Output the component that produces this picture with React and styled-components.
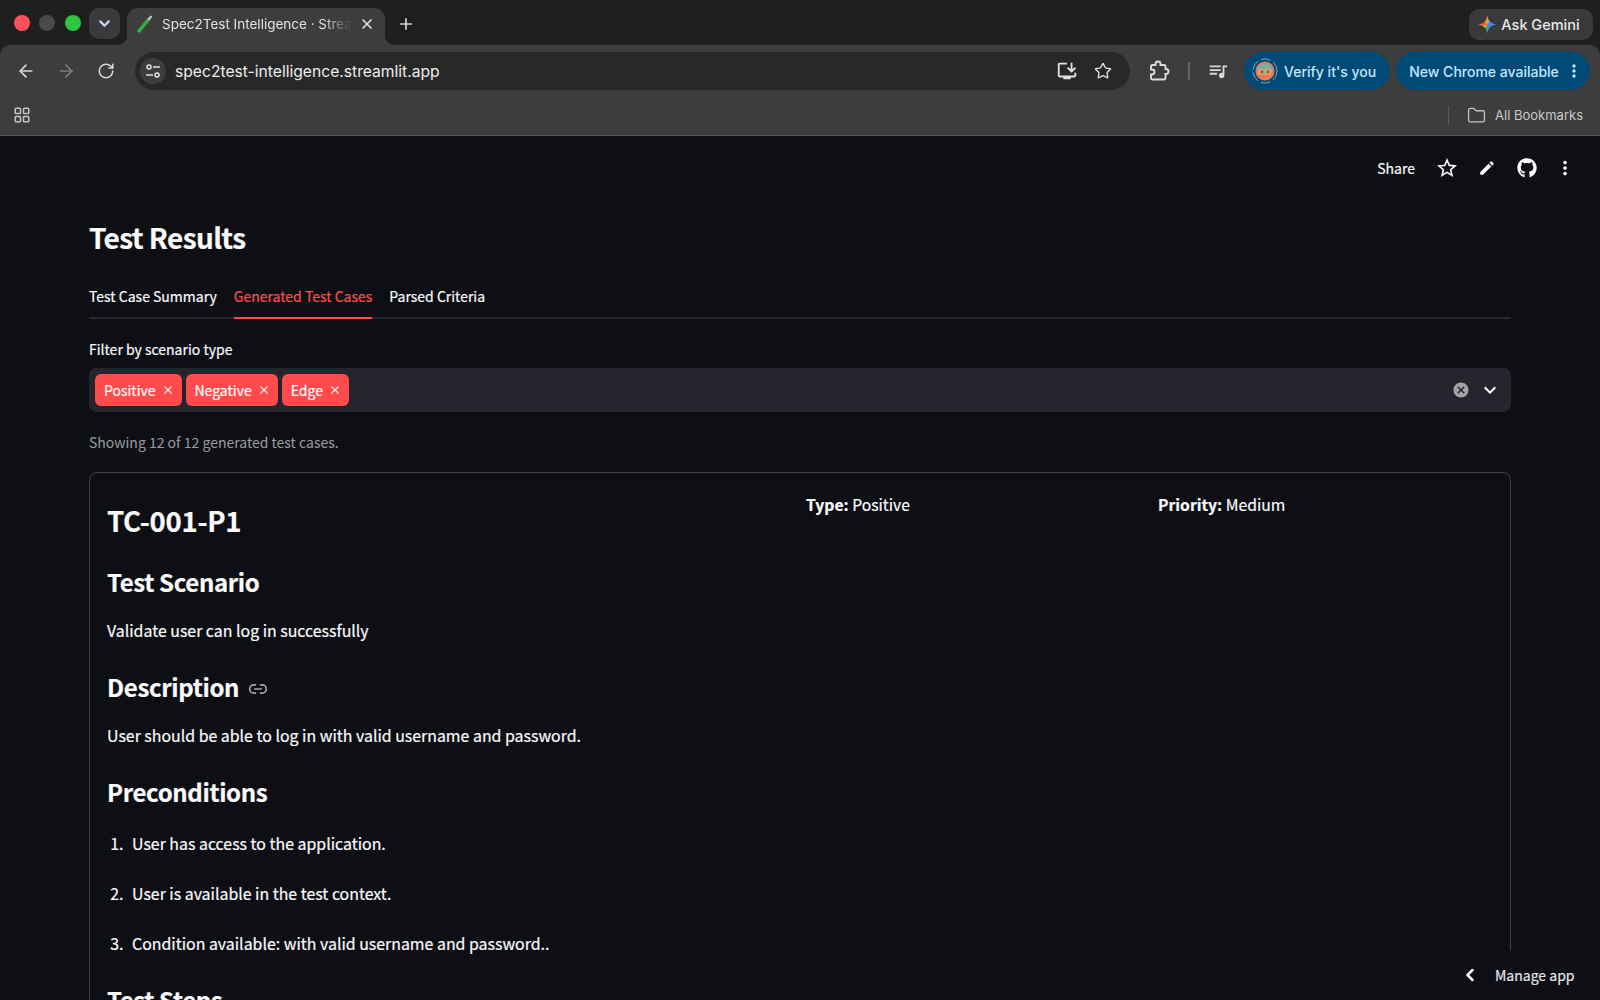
import React from 'react';
import styled, { createGlobalStyle } from 'styled-components';
import { ArrowLeft, ArrowRight, RotateCw, Star, Plus, X, ChevronDown, LayoutGrid, Folder, ChevronLeft, Link2 } from 'lucide-react';
import { MdOutlineInstallDesktop, MdQueueMusic, MdMoreVert, MdEdit, MdStarBorder, MdCancel, MdClose, MdExpandMore } from 'react-icons/md';
import { FaGithub } from 'react-icons/fa';

const SANS = `"Noto Sans CJK SC", "Noto Sans", sans-serif`;
const UI = `Inter, Roboto, sans-serif`;
const PAGE_BG = '#0d0f14';

const Global = createGlobalStyle`
    html, body { margin: 0; padding: 0; background: ${PAGE_BG}; }
    * { box-sizing: border-box; }
`;

const tags = ['Positive', 'Negative', 'Edge'];
const preconditions = [
    'User has access to the application.',
    'User is available in the test context.',
    'Condition available: with valid username and password..',
];

const App = () => {
    return (
        <Window>
            <Global />
            <TabStrip>
                <Light color="#ff5257" />
                <Light color="#4a4a4c" />
                <Light color="#2bc840" />
                <TabSearch><ChevronDown size={17} strokeWidth={3} color="#c5d6f5" /></TabSearch>
                <Tab>
                    <svg width="18" height="18" viewBox="0 0 18 18" fill="none" strokeLinecap="round">
                        <path d="M3 16 L12.5 4.5" stroke="#2fb344" strokeWidth="3.4" />
                        <path d="M13 4 L15 1.8" stroke="#b9c9b6" strokeWidth="2.4" />
                    </svg>
                    <TabTitle>Spec2Test Intelligence · Streamlit</TabTitle>
                    <X size={16} strokeWidth={2.4} color="#e6e6e6" />
                </Tab>
                <NewTab><Plus size={18} strokeWidth={2.2} color="#d6d6d6" /></NewTab>
                <GeminiButton>
                    <GeminiStar />
                    Ask Gemini
                </GeminiButton>
            </TabStrip>

            <Toolbar>
                <NavRow>
                    <NavButton><ArrowLeft size={20} color="#d8d8d8" /></NavButton>
                    <NavButton><ArrowRight size={20} color="#7c7c7c" /></NavButton>
                    <NavButton><RotateCw size={18} color="#d8d8d8" /></NavButton>
                    <Omnibox>
                        <TuneBadge>
                            <svg width="16" height="16" viewBox="0 0 16 16" fill="none" stroke="#e2e2e2" strokeWidth="1.5">
                                <circle cx="4" cy="4" r="2" />
                                <path d="M8 4 H15" />
                                <path d="M1 12 H8" />
                                <circle cx="12" cy="12" r="2" />
                            </svg>
                        </TuneBadge>
                        <Url>spec2test-intelligence.streamlit.app</Url>
                        <OmniIcons>
                            <MdOutlineInstallDesktop size={22} color="#e2e2e2" />
                            <Star size={18} color="#e2e2e2" strokeWidth={1.8} />
                        </OmniIcons>
                    </Omnibox>
                    <ExtensionIcon>
                        <svg width="24" height="24" viewBox="0 0 24 24" fill="none" stroke="#dcdcdc" strokeWidth="1.9">
                            <path d="M6.5 6 H9.5 V5 a2.5 2.5 0 0 1 5 0 V6 H18 a1.5 1.5 0 0 1 1.5 1.5 V10 H20 a2.5 2.5 0 0 1 0 5 H19.5 V19 a1.5 1.5 0 0 1 -1.5 1.5 H6.5 A1.5 1.5 0 0 1 5 19 V15.5 H6 a2.5 2.5 0 0 0 0 -5 H5 V7.5 A1.5 1.5 0 0 1 6.5 6 Z" />
                        </svg>
                    </ExtensionIcon>
                    <ToolbarDivider />
                    <MediaIcon><MdQueueMusic size={22} color="#d8d8d8" /></MediaIcon>
                    <Pill $first>
                        <svg width="26" height="26" viewBox="0 0 26 26">
                            <circle cx="13" cy="13" r="12" fill="none" stroke="#8fa3b3" strokeWidth="1" strokeDasharray="10 3" />
                            <circle cx="13" cy="13" r="9.5" fill="#e8775f" />
                            <rect x="6" y="10" width="14" height="7" rx="2" fill="#d9a05f" />
                            <path d="M5 9 Q13 3 21 9 L20 11 H6 Z" fill="#6fb3a5" />
                            <circle cx="10" cy="14" r="1.4" fill="#7d5a6a" />
                            <circle cx="16" cy="14" r="1.4" fill="#7d5a6a" />
                        </svg>
                        Verify it's you
                    </Pill>
                    <Pill>
                        New Chrome available
                        <MdMoreVert size={20} />
                    </Pill>
                </NavRow>
                <BookmarkRow>
                    <LayoutGrid size={18} color="#c4c4c4" strokeWidth={2} />
                    <BookmarkDivider />
                    <Folder size={19} color="#c4c4c4" strokeWidth={1.6} />
                    <BookmarkLabel>All Bookmarks</BookmarkLabel>
                </BookmarkRow>
            </Toolbar>

            <Page>
                <AppHeader>
                    <ShareLabel>Share</ShareLabel>
                    <HeaderIcon><MdStarBorder size={24} /></HeaderIcon>
                    <HeaderIcon><MdEdit size={18} /></HeaderIcon>
                    <HeaderIcon><FaGithub size={20} /></HeaderIcon>
                    <HeaderIcon><MdMoreVert size={22} /></HeaderIcon>
                </AppHeader>
                <Main>
                    <Title>Test Results</Title>
                    <TabList>
                        <ResultTab>Test Case Summary</ResultTab>
                        <ResultTab $active>Generated Test Cases</ResultTab>
                        <ResultTab>Parsed Criteria</ResultTab>
                    </TabList>
                    <FilterLabel>Filter by scenario type</FilterLabel>
                    <MultiSelect>
                        {tags.map(tag => (
                            <Tag key={tag}>
                                {tag}
                                <MdClose size={14} />
                            </Tag>
                        ))}
                        <SelectIcons>
                            <MdCancel size={18} color="#a3a4a9" />
                            <MdExpandMore size={24} color="#fafafa" />
                        </SelectIcons>
                    </MultiSelect>
                    <Caption>Showing 12 of 12 generated test cases.</Caption>
                    <Card>
                        <CardHead>
                            <CaseId>TC-001-P1</CaseId>
                            <Meta><strong>Type:</strong> Positive</Meta>
                            <Meta><strong>Priority:</strong> Medium</Meta>
                        </CardHead>
                        <SectionTitle>Test Scenario</SectionTitle>
                        <Paragraph>Validate user can log in successfully</Paragraph>
                        <SectionTitle>
                            Description
                            <LinkMark><Link2 size={20} /></LinkMark>
                        </SectionTitle>
                        <Paragraph>User should be able to log in with valid username and password.</Paragraph>
                        <SectionTitle>Preconditions</SectionTitle>
                        <Steps>
                            {preconditions.map(item => <li key={item}>{item}</li>)}
                        </Steps>
                        <SectionTitle>Test Steps</SectionTitle>
                    </Card>
                </Main>
                <ManageApp>
                    <ChevronLeft size={20} strokeWidth={3} color="#fafafa" />
                    <ManageLabel>Manage app</ManageLabel>
                </ManageApp>
            </Page>
        </Window>
    );
};

const Window = styled.div`
    width: 100%;
    height: 100vh;
    overflow: hidden;
    display: flex;
    flex-direction: column;
    background: #1f1f20;
`;

const TabStrip = styled.div`
    height: 45px;
    flex: none;
    display: flex;
    align-items: flex-start;
    padding: 8px 7px 0 13.5px;
`;

const Light = styled.span`
    width: 16px;
    height: 16px;
    margin: 7px 9.5px 0 0;
    border-radius: 50%;
    background: ${p => p.color};
`;

const TabSearch = styled.div`
    width: 31px;
    height: 31px;
    margin-left: -1px;
    border-radius: 10px;
    background: #3a3a3c;
    display: flex;
    align-items: center;
    justify-content: center;
`;

const Tab = styled.div`
    position: relative;
    width: 258px;
    height: 37px;
    margin-left: 7px;
    padding: 0 10px 5px 9px;
    border-radius: 11px 11px 0 0;
    background: #3d3d3d;
    display: flex;
    align-items: center;
    gap: 8px;
    &::before, &::after {
        content: '';
        position: absolute;
        bottom: 0;
        width: 10px;
        height: 10px;
    }
    &::before {
        left: -10px;
        background: radial-gradient(circle at 0 0, transparent 10px, #3d3d3d 10.5px);
    }
    &::after {
        right: -10px;
        background: radial-gradient(circle at 100% 0, transparent 10px, #3d3d3d 10.5px);
    }
`;

const TabTitle = styled.span`
    flex: 1;
    min-width: 0;
    overflow: hidden;
    white-space: nowrap;
    font: 400 13.5px ${UI};
    color: #e2e2e2;
    -webkit-mask-image: linear-gradient(90deg, #000 85%, transparent);
    mask-image: linear-gradient(90deg, #000 85%, transparent);
`;

const NewTab = styled.div`
    width: 24px;
    height: 31px;
    margin-left: 9px;
    display: flex;
    align-items: center;
    justify-content: center;
`;

const GeminiButton = styled.div`
    margin-left: auto;
    margin-top: 1px;
    width: 124px;
    height: 31px;
    padding-right: 4px;
    border-radius: 10px;
    background: #3a3a3c;
    display: flex;
    align-items: center;
    justify-content: center;
    gap: 5px;
    font: 500 14.5px ${UI};
    color: #e8e8e8;
`;

const GeminiStar = styled.span`
    width: 18px;
    height: 18px;
    flex: none;
    background: conic-gradient(#f2a33a 0deg, #4285f4 60deg, #4285f4 130deg, #34a853 190deg, #f4c20d 240deg, #ea4335 290deg, #f2a33a 360deg);
    clip-path: path('M9 0 C9.8 5.2 12.8 8.2 18 9 C12.8 9.8 9.8 12.8 9 18 C8.2 12.8 5.2 9.8 0 9 C5.2 8.2 8.2 5.2 9 0 Z');
`;

const Toolbar = styled.div`
    height: 91px;
    flex: none;
    border-radius: 10px 10px 0 0;
    border-bottom: 1px solid #565656;
    background: #3d3d3d;
`;

const NavRow = styled.div`
    height: 52px;
    padding: 7px 7px 7px 6px;
    display: flex;
    align-items: center;
`;

const NavButton = styled.div`
    width: 40px;
    height: 38px;
    display: flex;
    align-items: center;
    justify-content: center;
`;

const Omnibox = styled.div`
    width: 995px;
    height: 38px;
    margin-left: 9px;
    padding: 0 18px 0 5px;
    border-radius: 19px;
    background: #282828;
    display: flex;
    align-items: center;
`;

const TuneBadge = styled.div`
    width: 26px;
    height: 26px;
    border-radius: 50%;
    background: #3d3d3d;
    display: flex;
    align-items: center;
    justify-content: center;
`;

const Url = styled.span`
    margin-left: 9px;
    font: 400 15.65px ${UI};
    color: #ececec;
`;

const OmniIcons = styled.div`
    margin-left: auto;
    display: flex;
    align-items: center;
    gap: 16px;
`;

const ExtensionIcon = styled.div`
    margin-left: 16px;
    display: flex;
`;

const ToolbarDivider = styled.div`
    width: 2px;
    height: 18px;
    margin-left: 18px;
    background: #666;
`;

const MediaIcon = styled.div`
    margin-left: 17px;
    display: flex;
`;

const Pill = styled.div`
    height: 38px;
    margin-left: ${p => (p.$first ? '15px' : '6px')};
    padding: ${p => (p.$first ? '0 14px 0 8px' : '0 6px 0 13px')};
    border-radius: 19px;
    background: #004a77;
    display: flex;
    align-items: center;
    gap: ${p => (p.$first ? '6px' : '5px')};
    white-space: nowrap;
    font: 500 14px ${UI};
    color: #c2e7ff;
`;

const BookmarkRow = styled.div`
    height: 38px;
    padding: 0 17px 2px 13px;
    display: flex;
    align-items: center;
`;

const BookmarkDivider = styled.div`
    width: 1px;
    height: 18px;
    margin-left: auto;
    margin-right: 18px;
    background: #5c5c5c;
`;

const BookmarkLabel = styled.span`
    margin-left: 9px;
    font: 400 13px ${UI};
    color: #c8c8c8;
`;

const Page = styled.div`
    position: relative;
    flex: 1;
    min-height: 0;
    overflow: hidden;
    background: ${PAGE_BG};
    color: #fafafa;
    font-family: ${SANS};
    -webkit-text-stroke: 0.2px currentColor;
`;

const AppHeader = styled.div`
    height: 64px;
    padding: 0 21px 0 0;
    display: flex;
    align-items: center;
    justify-content: flex-end;
`;

const ShareLabel = styled.span`
    margin-right: 18px;
    font-size: 14px;
    line-height: 20px;
`;

const HeaderIcon = styled.div`
    width: 28px;
    height: 28px;
    margin-left: 12px;
    display: flex;
    align-items: center;
    justify-content: center;
    &:first-of-type { margin-left: 0; }
    &:last-child { margin-left: 10px; }
`;

const Main = styled.div`
    padding: 0 89px;
`;

const Title = styled.h1`
    margin: 17px 0 0;
    font-size: 28px;
    line-height: 40px;
    font-weight: 700;
    letter-spacing: -0.6px;
`;

const TabList = styled.div`
    margin-top: 22px;
    display: flex;
    gap: 17px;
    box-shadow: inset 0 -2px 0 #262730;
`;

const ResultTab = styled.div`
    height: 40px;
    padding-top: 7px;
    font-size: 14px;
    line-height: 20px;
    color: ${p => (p.$active ? '#ff4b4b' : '#fafafa')};
    border-bottom: 2px solid ${p => (p.$active ? '#ff4b4b' : 'transparent')};
`;

const FilterLabel = styled.div`
    margin-top: 20px;
    margin-bottom: 9px;
    font-size: 14px;
    line-height: 20px;
`;

const MultiSelect = styled.div`
    height: 44px;
    padding: 0 9px 0 6px;
    border-radius: 8px;
    background: #24252d;
    display: flex;
    align-items: center;
    gap: 4px;
`;

const Tag = styled.span`
    height: 32px;
    padding: 0 7px 0 9px;
    border-radius: 6px;
    background: #ff4b4b;
    display: flex;
    align-items: center;
    gap: 5px;
    font-size: 14px;
    line-height: 20px;
    color: #fff;
`;

const SelectIcons = styled.div`
    margin-left: auto;
    display: flex;
    align-items: center;
    gap: 8px;
`;

const Caption = styled.div`
    margin-top: 20px;
    font-size: 14px;
    line-height: 20px;
    color: rgba(250, 250, 250, 0.6);
    -webkit-text-stroke: 0;
`;

const Card = styled.div`
    margin-top: 20px;
    padding: 18px 17px;
    border: 1px solid #3e4147;
    border-radius: 8px;
`;

const CardHead = styled.div`
    display: grid;
    grid-template-columns: 699px 352px 1fr;
    align-items: start;
`;

const CaseId = styled.h2`
    margin: 10px 0 0;
    font-size: 27.5px;
    line-height: 39px;
    font-weight: 700;
    letter-spacing: -0.3px;
`;

const Meta = styled.div`
    font-size: 15.7px;
    line-height: 28px;
    strong { font-weight: 700; }
`;

const SectionTitle = styled.h3`
    margin: 24px 0 0;
    display: flex;
    align-items: center;
    font-size: 24px;
    line-height: 36px;
    font-weight: 700;
    letter-spacing: -0.35px;
`;

const LinkMark = styled.span`
    margin: 3px 0 0 9px;
    display: flex;
    color: #a3a4a9;
    -webkit-text-stroke: 0;
`;

const Paragraph = styled.p`
    margin: 17px 0 0;
    font-size: 15.9px;
    line-height: 28px;
`;

const Steps = styled.ol`
    margin: 20px 0 0;
    padding: 0 0 0 20px;
    font-size: 15.9px;
    line-height: 28px;
    li { margin-bottom: 22px; padding-left: 5px; }
`;

const ManageApp = styled.div`
    position: absolute;
    right: 0;
    bottom: 0;
    width: 160px;
    height: 49px;
    padding: 0 0 2px 20px;
    background: ${PAGE_BG};
    display: flex;
    align-items: center;
`;

const ManageLabel = styled.span`
    margin-left: 15px;
    font-size: 14px;
    line-height: 20px;
    color: #e4e4e4;
`;

export default App;
